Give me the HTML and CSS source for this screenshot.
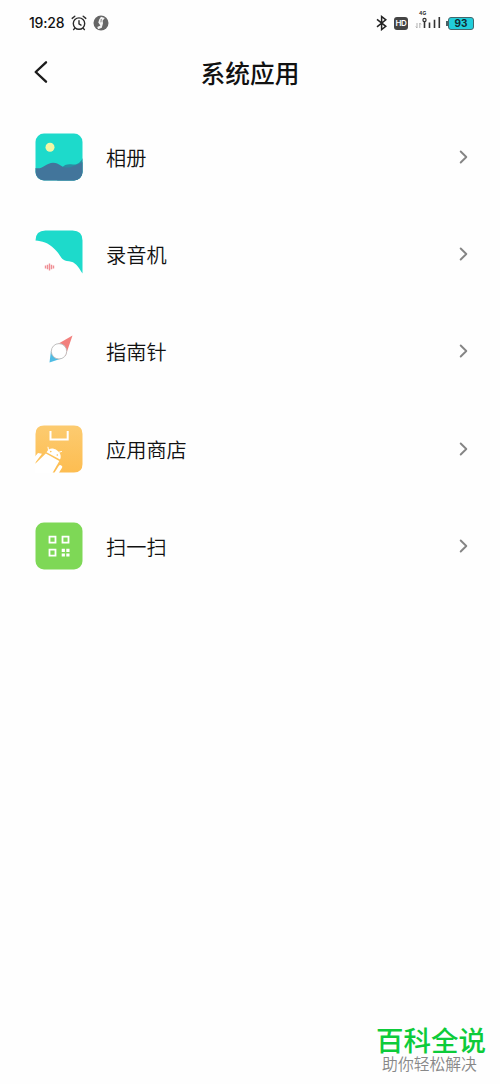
FILE: index.html
```html
<!DOCTYPE html>
<html lang="zh-CN">
<head>
<meta charset="utf-8">
<title>系统应用</title>
<link rel="stylesheet" href="styles.css">
</head>
<body>
<div class="screen">
  <div class="status">
    <span class="time">19:28</span>
    <svg class="alarm" width="16" height="16" viewBox="0 0 16 16" fill="none" stroke="#2b2b2b" stroke-width="1.4" stroke-linecap="round"><circle cx="8" cy="8.6" r="5.7"/><path d="M1.2 3.4 3.8 1.3M14.8 3.4 12.2 1.3M8 5.6v3.2l2 1.3M3.8 13.2l-1.2 1.4M12.2 13.2l1.2 1.4"/></svg>
    <svg class="globe" width="16" height="16" viewBox="0 0 16 16"><circle cx="8" cy="8" r="7.5" fill="#666"/><path d="M8 1.800 11.800 3 9.600 5.800 10 8.200 8.800 12.700 5.200 14.200 4.200 12 7.400 10.500 5.300 7.500 6.200 4.500Z" fill="#f4f4f4"/><path d="m8.300 4-.4 3.300" fill="none" stroke="#777" stroke-width=".9"/></svg>
    <span class="spacer"></span>
    <svg class="bluetooth" width="12" height="16" viewBox="0 0 12 16" fill="none" stroke="#222" stroke-width="1.5"><path d="M1 4.300 9.800 11.300 5.600 14.600V1.500L9.800 4.800 1 11.800"/></svg>
    <span class="hd">HD</span>
    <svg class="signal" width="27" height="20" viewBox="0 0 27 20"><text class="network" x="4" y="4.500">4G</text><path d="M2 13v5M.8 16.500 2 18M4.800 18v-5M6 14.500 4.800 13" fill="none" stroke="#aaa" stroke-width=".9"/><circle cx="9.500" cy="10" r="1.600" fill="none" stroke="#333" stroke-width="1.200"/><path d="M9.500 11.500V18M14.500 12.500V18M19.500 9.700V18M24.300 7V18" stroke="#333" stroke-width="1.600"/></svg>
    <span class="battery"><i class="nub"></i><b class="level">93</b></span>
  </div>

  <header class="header">
    <svg class="back" width="16" height="24" viewBox="0 0 16 24" fill="none" stroke="#1c1c1c" stroke-width="2.4" stroke-linecap="round" stroke-linejoin="round"><path d="M13 2.300 2.700 12 13 21.700"/></svg>
    <h1 class="title">系统应用</h1>
  </header>

  <main class="list">
    <div class="row">
      <svg class="icon" viewBox="0 0 48 48"><defs><clipPath id="tile"><rect x=".5" y=".5" width="47" height="47" rx="8.500"/></clipPath></defs><g clip-path="url(#tile)"><path d="M0 0h48v48H0z" fill="#1ddacb"/><circle cx="15" cy="14.300" r="4.500" fill="#f3f7a5"/><path d="M27 35C29 31.500 32 31 36 31.200S43 33 48 25V48H22Z" fill="#2a8da2"/><path d="M0 35C8 37 11 29.700 18 29.700S25 34 31 34.500 39 32 43 31.500L48 29V48H0Z" fill="#42759b"/></g></svg>
      <span class="label">相册</span>
      <svg class="chevron" viewBox="0 0 10 14"><path d="m1.700 1.500 5.600 5.500-5.600 5.500"/></svg>
    </div>
    <div class="row">
      <svg class="icon" viewBox="0 0 48 48"><path d="M.5 10.500Q.5.500 10.500.500h27q10 0 10 10V43.500C43 36 40 31.800 34 31.200 25 30.500 27 26 19.500 19 13 12.500 7 11 .5 10.500Z" fill="#1ddacb"/><path d="M10.500 35.500v3M12.500 34.800v4.400M14.500 33.500v7M16.500 34.800v4.400M18.500 35.500v3" stroke="#ef8e94" stroke-width="1.400"/></svg>
      <span class="label">录音机</span>
      <svg class="chevron" viewBox="0 0 10 14"><path d="m1.700 1.500 5.600 5.500-5.600 5.500"/></svg>
    </div>
    <div class="row">
      <svg class="icon" viewBox="0 0 48 48"><path d="M37.500 8.500 18.500 19.500 30.500 29Z" fill="#f27f7c"/><path d="M14.500 35.500 16 23.500 26.500 31.500Z" fill="#4fbce4"/><circle cx="24" cy="24.300" r="7.700" fill="#fff" stroke="#b9b9b9" stroke-width=".9"/></svg>
      <span class="label">指南针</span>
      <svg class="chevron" viewBox="0 0 10 14"><path d="m1.700 1.500 5.600 5.500-5.600 5.500"/></svg>
    </div>
    <div class="row">
      <svg class="icon" viewBox="0 0 48 48"><defs><linearGradient id="orange" x2="0" y2="1"><stop stop-color="#fccb70"/><stop offset="1" stop-color="#fdbd51"/></linearGradient></defs><path d="M9 .5h30q8.500 0 8.500 8.500v30q0 8.500-8.500 8.500H9Q.5 47.500.5 39V9Q.5.500 9 .500Z" fill="url(#orange)"/><path d="M15.500 6v8.500h17.200V6" fill="none" stroke="#fff" stroke-width="2"/><path d="M11.500 27.300C13.500 22.600 18 22.600 21.500 24.900S26.800 30.500 25 34.500Z" fill="#fff"/><path d="m13.500 25-.5-2.800M23 27.500l3.500-1" stroke="#fff" stroke-width="1" stroke-linecap="round"/><path d="M10.800 28.500 24.300 36 17.500 48H0V39Z" fill="#fff"/><path d="M7 28.800 3 28 0 31.500V48h4L0 38Z" fill="#fff"/><path d="m25.300 42-3.800 6" stroke="#fff" stroke-width="3.800" stroke-linecap="round"/><circle cx="15.800" cy="26.600" r=".8" fill="#fdbd51"/><circle cx="22.300" cy="30" r=".8" fill="#fdbd51"/></svg>
      <span class="label">应用商店</span>
      <svg class="chevron" viewBox="0 0 10 14"><path d="m1.700 1.500 5.600 5.500-5.600 5.500"/></svg>
    </div>
    <div class="row">
      <svg class="icon" viewBox="0 0 48 48"><rect x=".5" y=".5" width="47" height="47" rx="8.500" fill="#7ed856"/><g fill="none" stroke="#fff" stroke-width="1.800"><path d="M14.500 14.700h6v6h-6zM27.500 14.700h6v6h-6zM14.500 27.700h6v6h-6z"/></g><path d="M26.700 26.800h3.200V30h-3.200zM31.300 26.800h3.200V30h-3.200zM26.700 31.400h3.200v3.200h-3.200zM31.300 31.400h3.200v3.200h-3.200z" fill="#fff"/></svg>
      <span class="label">扫一扫</span>
      <svg class="chevron" viewBox="0 0 10 14"><path d="m1.700 1.500 5.600 5.500-5.600 5.500"/></svg>
    </div>
  </main>

  <footer class="brand">
    <div class="brand-name">百科全说</div>
    <div class="brand-sub">助你轻松解决</div>
  </footer>
</div>
</body>
</html>
```
FILE: styles.css
```css
* { box-sizing: border-box; }
body { margin: 0; background: #fefefe; color: #111; font-family: "Noto Sans CJK SC", sans-serif; }
.screen { display: flex; flex-direction: column; height: 1084px; overflow: hidden; }
.status { display: flex; align-items: center; height: 46px; padding: 0 26px 0 29px; }
.time { width: 42px; font: 500 14px/20px Inter, sans-serif; letter-spacing: -0.2px; white-space: nowrap; }
.globe { margin-left: 6px; }
.spacer { flex: 1; }
.hd { width: 14px; height: 13px; margin: 0 7px 0 6px; border-radius: 3px; background: #444; color: #fff; font: 600 8px/13px Inter, sans-serif; text-align: center; letter-spacing: -0.3px; }
.signal { margin: -6px 4px 0 0; }
.network { font: 700 5px Inter, sans-serif; fill: #333; }
.battery { display: flex; align-items: center; }
.nub { width: 2px; height: 5px; background: #4a6266; }
.level { width: 26px; height: 13px; border: 1px solid #43676c; border-radius: 3px; background: #22cedb; color: #102b32; font: 700 10px/11px Inter, sans-serif; text-align: center; }
.header { display: grid; grid-template-columns: 60px 1fr 60px; align-items: center; height: 52px; }
.back { margin-left: 33px; }
.title { margin: 0; font-size: 24.7px; line-height: 36px; font-weight: 500; text-align: center; }
.list { padding-top: 10px; }
.row { display: flex; align-items: center; height: 97.3px; padding: 0 31px 0 35px; }
.icon { width: 48px; height: 48px; flex: none; }
.label { flex: 1; margin-left: 23px; padding-top: 2px; font-size: 20.2px; line-height: 30px; font-weight: 350; }
.chevron { width: 10px; height: 14px; fill: none; stroke: #858585; stroke-width: 1.9; stroke-linecap: round; stroke-linejoin: round; }
.brand { display: flex; flex-direction: column; align-items: center; gap: 2px; width: 110px; margin: auto 14px 11px auto; white-space: nowrap; }
.brand-name { color: #0dcb3a; font-size: 27.5px; line-height: 28px; font-weight: 500; }
.brand-sub { margin-right: 3px; color: #888; font-size: 15.8px; line-height: 18px; font-weight: 350; }
```
